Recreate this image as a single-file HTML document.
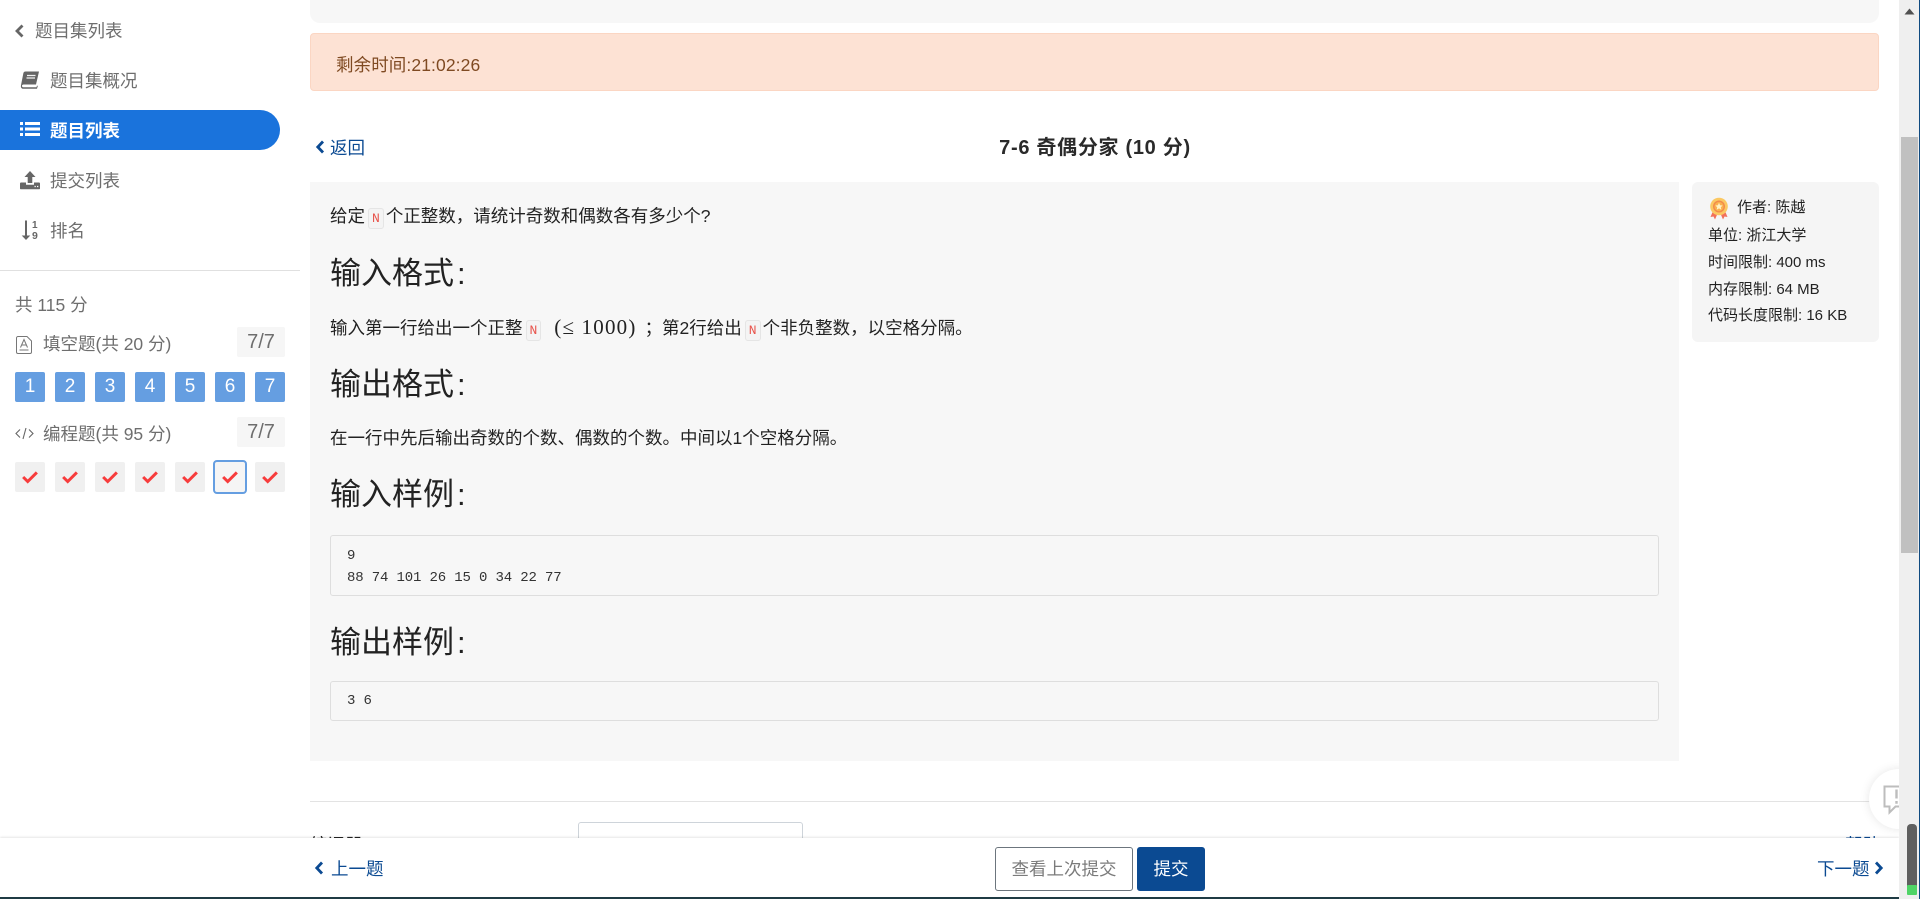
<!DOCTYPE html>
<html lang="zh-CN"><head><meta charset="utf-8"><title>7-6 奇偶分家</title>
<style>
html,body{margin:0;padding:0;width:1920px;height:899px;overflow:hidden;background:#fff}
body{position:relative;font-family:"Liberation Sans","Noto Sans CJK SC",sans-serif;font-size:17.5px;color:#222}
.a{position:absolute;white-space:nowrap}
.t{position:absolute;white-space:nowrap;line-height:30px;height:30px}
.s{color:#6e6e6e}
.h{font-size:31px;line-height:44px;height:44px;color:#222;position:absolute;white-space:nowrap;left:330px}
.h span{margin-left:3px}
.b{position:absolute;width:30px;height:30px;top:372px;background:#659ee1;color:#fff;border-radius:2px;text-align:center;line-height:30px;font-size:19px}
.c{position:absolute;width:30px;height:30px;top:462px;background:#f0f0f0;border-radius:2px}
.c svg{position:absolute;left:7px;top:7px}
.n{position:absolute;width:48px;height:30px;left:237px;background:#f6f6f6;border-radius:2px;color:#6e6e6e;text-align:center;line-height:30px;font-size:20px}
code{font-family:"Liberation Mono",monospace;font-size:13px;color:#e8524a;background:#f4f4f4;border:1px solid #e5e5e5;border-radius:3px;padding:2px 3px;margin:0 2px 0 3px}
.pre{position:absolute;left:330px;width:1329px;background:#f7f7f7;border:1px solid #dedede;border-radius:3px;box-sizing:border-box}
.pre div{position:absolute;left:16px;font:14px/22px "Liberation Mono",monospace;letter-spacing:-.15px;color:#333;white-space:pre}
.i{position:absolute;left:1708px;font-size:15px;line-height:27px;white-space:nowrap;color:#222}
.l{color:#0b4a92}
</style></head><body>

<!-- sidebar -->
<svg class="a" style="left:14px;top:23px" width="11" height="16" viewBox="0 0 11 16"><path d="M8.500 2.500L3 8l5.500 5.500" fill="none" stroke="#666" stroke-width="2.800"/></svg>
<div class="t s" style="left:35px;top:16px">题目集列表</div>
<svg class="a" style="left:20px;top:70px" width="20" height="20" viewBox="0 0 20 20"><path d="M5.500 1.500H19L16 14.500H3.800C2.500 14.500 1.800 15.300 2 16.200 2.200 17 3 17.300 4 17.300H16.500L17 15.500 17.800 16 17 18.800H3.500C1.500 18.800 .5 17.300 1 15.200L3.300 3.500C3.500 2.300 4.300 1.500 5.500 1.500Z" fill="#666"/><path d="M7 5.500h8.500M6.500 8h8.500" stroke="#f2f2f2" stroke-width="1.300"/></svg>
<div class="t s" style="left:50px;top:66px">题目集概况</div>

<div class="a" style="left:0;top:110px;width:280px;height:40px;background:#1a73dc;border-radius:0 20px 20px 0"></div>
<svg class="a" style="left:20px;top:121px" width="20" height="17" viewBox="0 0 20 17"><path d="M0 1h3v3H0zM0 6.500h3v3H0zM0 12h3v3H0zM5 1h15v3H5zM5 6.500h15v3H5zM5 12h15v3H5z" fill="#fff"/></svg>
<div class="t" style="left:50px;top:116px;color:#fff;font-weight:700">题目列表</div>

<svg class="a" style="left:20px;top:170px" width="20" height="20" viewBox="0 0 20 20"><path d="M10 1l5.500 6H12.300v6H7.700V7H4.500z" fill="#666"/><path d="M1 12.500h5v2.200h8v-2.200h5a1 1 0 0 1 1 1v5a.8.8 0 0 1-.8.8H.8A.8.8 0 0 1 0 18.500v-5a1 1 0 0 1 1-1z" fill="#666"/><path d="M14.500 16.500h1.300M17 16.500h1.300" stroke="#fff" stroke-width="1.200"/></svg>
<div class="t s" style="left:50px;top:166px">提交列表</div>
<svg class="a" style="left:21px;top:219px" width="20" height="22" viewBox="0 0 20 22"><path d="M4 1.500h2v15h3.300L5 21 .7 16.500H4z" fill="#666"/><text x="11" y="9" font-size="10" font-weight="700" fill="#666" font-family="Liberation Sans">1</text><text x="11" y="20" font-size="10.500" font-weight="700" fill="#666" font-family="Liberation Sans">9</text></svg>
<div class="t s" style="left:50px;top:216px">排名</div>

<div class="a" style="left:0;top:270px;width:300px;height:1px;background:#e0e0e0"></div>
<div class="t s" style="left:15px;top:290px">共 115 分</div>
<svg class="a" style="left:15px;top:335px" width="18" height="20" viewBox="0 0 18 20"><path d="M3 1.500h9l4.500 4.500v11a1.500 1.500 0 0 1-1.500 1.500H3A1.500 1.500 0 0 1 1.500 17V3A1.500 1.500 0 0 1 3 1.500z" fill="none" stroke="#777" stroke-width="1"/><path d="M5.500 12.500L9 4.500l3.500 8M7 10h4M4.500 15h9" fill="none" stroke="#777" stroke-width="1"/></svg>
<div class="t s" style="left:43px;top:329px">填空题(共 20 分)</div>
<div class="n" style="top:327px">7/7</div>
<div class="b" style="left:15px">1</div><div class="b" style="left:55px">2</div><div class="b" style="left:95px">3</div><div class="b" style="left:135px">4</div><div class="b" style="left:175px">5</div><div class="b" style="left:215px">6</div><div class="b" style="left:255px">7</div>
<svg class="a" style="left:15px;top:426px" width="19" height="15" viewBox="0 0 19 15"><path d="M5 3.500L1 7.500l4 4M14 3.500l4 4-4 4M11 2L8 13" fill="none" stroke="#666" stroke-width="1.100"/></svg>
<div class="t s" style="left:43px;top:419px">编程题(共 95 分)</div>
<div class="n" style="top:417px">7/7</div>
<div class="c" style="left:15px"><svg width="16" height="16" viewBox="0 0 14 14"><path d="M1 7L5 11 13 3" fill="none" stroke="#f73c3c" stroke-width="2.600"/></svg></div>
<div class="c" style="left:55px"><svg width="16" height="16" viewBox="0 0 14 14"><path d="M1 7L5 11 13 3" fill="none" stroke="#f73c3c" stroke-width="2.600"/></svg></div>
<div class="c" style="left:95px"><svg width="16" height="16" viewBox="0 0 14 14"><path d="M1 7L5 11 13 3" fill="none" stroke="#f73c3c" stroke-width="2.600"/></svg></div>
<div class="c" style="left:135px"><svg width="16" height="16" viewBox="0 0 14 14"><path d="M1 7L5 11 13 3" fill="none" stroke="#f73c3c" stroke-width="2.600"/></svg></div>
<div class="c" style="left:175px"><svg width="16" height="16" viewBox="0 0 14 14"><path d="M1 7L5 11 13 3" fill="none" stroke="#f73c3c" stroke-width="2.600"/></svg></div>
<div class="c" style="left:213px;top:460px;width:34px;height:34px;box-sizing:border-box;background:#f5f5f5;border:2px solid #659ee1;border-radius:4px"><svg width="16" height="16" viewBox="0 0 14 14"><path d="M1 7L5 11 13 3" fill="none" stroke="#f73c3c" stroke-width="2.600"/></svg></div>
<div class="c" style="left:255px"><svg width="16" height="16" viewBox="0 0 14 14"><path d="M1 7L5 11 13 3" fill="none" stroke="#f73c3c" stroke-width="2.600"/></svg></div>

<!-- top -->
<div class="a" style="left:310px;top:-20px;width:1569px;height:43px;background:#f7f7f7;border-radius:10px"></div>
<div class="a" style="left:310px;top:33px;width:1569px;height:58px;box-sizing:border-box;background:#fde2d4;border:1px solid #fbd6c3;border-radius:4px"></div>
<div class="t" style="left:336px;top:50px;color:#7f4a22;letter-spacing:.1px">剩余时间:21:02:26</div>

<svg class="a l" style="left:315px;top:139px" width="10" height="16" viewBox="0 0 10 16"><path d="M8 2.500L2.800 8 8 13.500" fill="none" stroke="#0b4a92" stroke-width="2.800"/></svg>
<div class="t l" style="left:330px;top:133px">返回</div>
<div class="t" style="left:0;top:133px;width:2190px;text-align:center;font-size:20px;font-weight:700;color:#2a2a2a;letter-spacing:.7px">7-6 奇偶分家 (10 分)</div>

<!-- problem card -->
<div class="a" style="left:310px;top:182px;width:1369px;height:579px;background:#f7f7f7"></div>
<div class="t" style="left:330px;top:201px">给定<code>N</code>个正整数，请统计奇数和偶数各有多少个?</div>
<div class="h" style="top:252px">输入格式<span>:</span></div>
<div class="t" style="left:330px;top:312px">输入第一行给出一个正整<code>N</code> <span style="font-family:'Liberation Serif',serif;font-size:21px;letter-spacing:1.200px;margin:0 8px 0 6px">(≤ 1000)</span>；第2行给出<code>N</code>个非负整数，以空格分隔。</div>
<div class="h" style="top:363px">输出格式<span>:</span></div>
<div class="t" style="left:330px;top:423px">在一行中先后输出奇数的个数、偶数的个数。中间以1个空格分隔。</div>
<div class="h" style="top:473px">输入样例<span>:</span></div>
<div class="pre" style="top:535px;height:61px"><div style="top:9px">9
88 74 101 26 15 0 34 22 77</div></div>
<div class="h" style="top:621px">输出样例<span>:</span></div>
<div class="pre" style="top:681px;height:40px"><div style="top:8px">3 6</div></div>

<!-- info card -->
<div class="a" style="left:1692px;top:182px;width:187px;height:160px;background:#f5f5f5;border-radius:6px"></div>
<svg class="a" style="left:1709px;top:197px" width="20" height="23" viewBox="0 0 20 23"><path d="M4 14l-2.500 6 3-.5 1.500 3 3-7zM16 14l2.500 6-3-.5-1.500 3-3-7z" fill="#f2705a"/><circle cx="10" cy="9.500" r="8.800" fill="#fbc862"/><circle cx="10" cy="9.500" r="6" fill="#f28b4a"/><circle cx="10" cy="9.500" r="4.600" fill="#fbb04e"/><path d="M10 5.800l1.100 2.400 2.500.3-1.800 1.700.5 2.500-2.300-1.300-2.300 1.300.5-2.500-1.800-1.700 2.500-.3z" fill="#fff3c4"/></svg>
<div class="i" style="left:1737px;top:194px">作者: 陈越</div>
<div class="i" style="top:222px">单位: 浙江大学</div>
<div class="i" style="top:249px">时间限制: 400 ms</div>
<div class="i" style="top:276px">内存限制: 64 MB</div>
<div class="i" style="top:302px">代码长度限制: 16 KB</div>

<!-- editor peek -->
<div class="a" style="left:310px;top:801px;width:1569px;height:1px;background:#e3e3e3"></div>
<div class="t" style="left:310px;top:830px">编译器 (C)</div>
<div class="a" style="left:578px;top:822px;width:225px;height:40px;box-sizing:border-box;border:1px solid #ced4da;border-radius:3px"></div>
<div class="t" style="left:600px;top:830px">C (gcc)</div>
<div class="t" style="left:1845px;top:830px;color:#0b4a92">帮助</div>

<!-- feedback -->
<div class="a" style="left:1869px;top:769px;width:60px;height:60px;background:#fff;border-radius:50%;box-shadow:0 0 10px rgba(0,0,0,.1)"></div>
<svg class="a" style="left:1883px;top:785px" width="18" height="30" viewBox="0 0 18 30"><path d="M17 1.500H1.500v20h5v6l6-6H17" fill="none" stroke="#bdbdbd" stroke-width="2"/><path d="M13.500 4.500v9M13.500 16v2.800" stroke="#bdbdbd" stroke-width="2.400"/></svg>

<!-- bottom bar -->
<div class="a" style="left:0;top:838px;width:1899px;height:61px;background:#fff;box-shadow:0 -1px 2px rgba(0,0,0,.1)"></div>
<svg class="a" style="left:314px;top:860px" width="10" height="16" viewBox="0 0 10 16"><path d="M8 2.500L2.800 8 8 13.500" fill="none" stroke="#0b4a92" stroke-width="2.800"/></svg>
<div class="t l" style="left:331px;top:854px">上一题</div>
<div class="a" style="left:995px;top:847px;width:138px;height:44px;box-sizing:border-box;border:1px solid #6c757d;border-radius:3px;text-align:center;line-height:42px;color:#7b7b7b">查看上次提交</div>
<div class="a" style="left:1137px;top:847px;width:68px;height:44px;background:#0b4a92;border-radius:3px;text-align:center;line-height:44px;color:#fff">提交</div>
<div class="t l" style="left:1817px;top:854px">下一题</div>
<svg class="a" style="left:1874px;top:860px" width="10" height="16" viewBox="0 0 10 16"><path d="M2 2.500L7.200 8 2 13.500" fill="none" stroke="#0b4a92" stroke-width="2.800"/></svg>

<!-- taskbar strip -->
<div class="a" style="left:0;top:897px;width:1899px;height:2px;background:#1f3b44"></div>

<!-- scrollbar -->
<div class="a" style="left:1899px;top:0;width:20px;height:899px;background:#efefef"></div>
<div class="a" style="left:1919px;top:0;width:1px;height:899px;background:#0f4a80"></div>
<svg class="a" style="left:1904px;top:8px" width="11" height="7" viewBox="0 0 11 7"><path d="M5.500 .5L10.500 6.500H.5z" fill="#505050"/></svg>
<div class="a" style="left:1901px;top:137px;width:17px;height:416px;background:#c0c0c0"></div>
<div class="a" style="left:1907px;top:824px;width:10px;height:71px;background:#5f5f5f;border-radius:4px"></div>
<div class="a" style="left:1907px;top:885px;width:10px;height:10px;background:#4fd466;border-radius:1px"></div>
</body></html>
